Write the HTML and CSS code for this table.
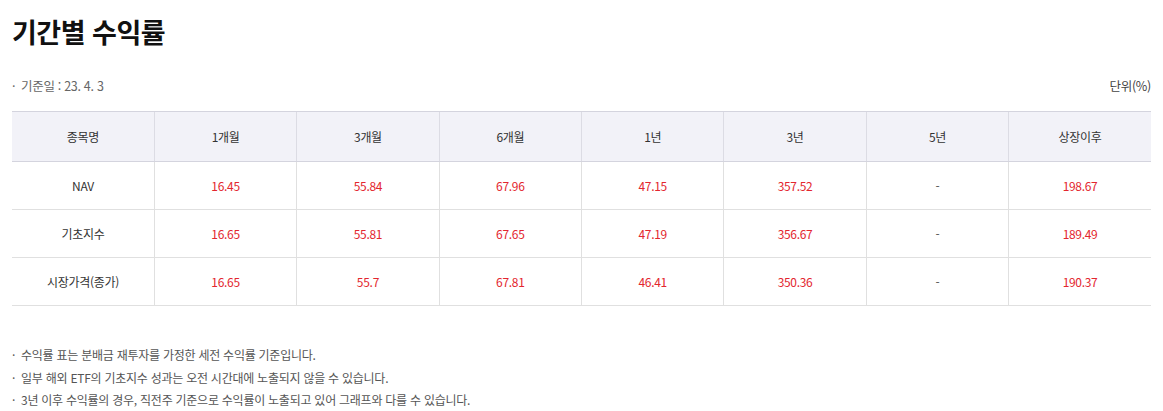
FILE: index.html
```html
<!DOCTYPE html>
<html lang="ko">
<head>
<meta charset="utf-8">
<link rel="stylesheet" href="styles.css">
</head>
<body>
<div class="page">
  <h1 class="title">기간별 수익률</h1>
  <div class="meta">
    <span class="date"><span class="dot">·</span>기준일 : 23. 4. 3</span>
    <span class="unit">단위(%)</span>
  </div>
  <table class="grid">
    <thead>
      <tr><th>종목명</th><th>1개월</th><th>3개월</th><th>6개월</th><th>1년</th><th>3년</th><th>5년</th><th>상장이후</th></tr>
    </thead>
    <tbody>
      <tr><td class="name">NAV</td><td class="up">16.45</td><td class="up">55.84</td><td class="up">67.96</td><td class="up">47.15</td><td class="up">357.52</td><td class="na">-</td><td class="up">198.67</td></tr>
      <tr><td class="name">기초지수</td><td class="up">16.65</td><td class="up">55.81</td><td class="up">67.65</td><td class="up">47.19</td><td class="up">356.67</td><td class="na">-</td><td class="up">189.49</td></tr>
      <tr><td class="name">시장가격(종가)</td><td class="up">16.65</td><td class="up">55.7</td><td class="up">67.81</td><td class="up">46.41</td><td class="up">350.36</td><td class="na">-</td><td class="up">190.37</td></tr>
    </tbody>
  </table>
  <ul class="notes">
    <li>수익률 표는 분배금 재투자를 가정한 세전 수익률 기준입니다.</li>
    <li>일부 해외 ETF의 기초지수 성과는 오전 시간대에 노출되지 않을 수 있습니다.</li>
    <li>3년 이후 수익률의 경우, 직전주 기준으로 수익률이 노출되고 있어 그래프와 다를 수 있습니다.</li>
  </ul>
</div>
</body>
</html>
```
FILE: styles.css
```css
* { box-sizing: border-box; }
body {
  margin: 0;
  background: #fff;
  font-family: "Noto Sans CJK KR", "Noto Sans", sans-serif;
  color: #333;
}
.page {
  padding: 12px 12px 0 12px;
}
.title {
  margin: 0;
  font-size: 27px;
  font-weight: 700;
  line-height: 40px;
  color: #111;
  letter-spacing: -0.5px;
}
.meta {
  display: flex;
  justify-content: space-between;
  align-items: center;
  margin-top: 23px;
  height: 20px;
  font-size: 12.5px;
  color: #666;
  letter-spacing: -0.3px;
}
.dot {
  display: inline-block;
  width: 9px;
  color: #666;
}
.unit { color: #444; }
.grid {
  margin-top: 16px;
  width: 1139px;
  border-collapse: collapse;
  table-layout: fixed;
  font-size: 12px;
  letter-spacing: -0.3px;
}
.grid th {
  height: 50px;
  background: #f2f2f8;
  border-top: 1px solid #d4d4de;
  border-bottom: 1px solid #d4d4de;
  border-left: 1px solid #dcdce4;
  font-weight: 400;
  color: #333;
  text-align: center;
}
.grid td {
  height: 48px;
  border-bottom: 1px solid #e0e0e0;
  border-left: 1px solid #e0e0e0;
  text-align: center;
}
.grid th:first-child, .grid td:first-child { border-left: none; }
.grid td.name { color: #333; }
.grid td.up { color: #e3262e; }
.grid td.na { color: #555; }
.notes {
  list-style: none;
  margin: 38px 0 0 0;
  padding: 0;
  font-size: 12px;
  color: #555;
  line-height: 22.5px;
  letter-spacing: -0.25px;
}
.notes li::before {
  content: "·";
  display: inline-block;
  width: 9px;
}
```
